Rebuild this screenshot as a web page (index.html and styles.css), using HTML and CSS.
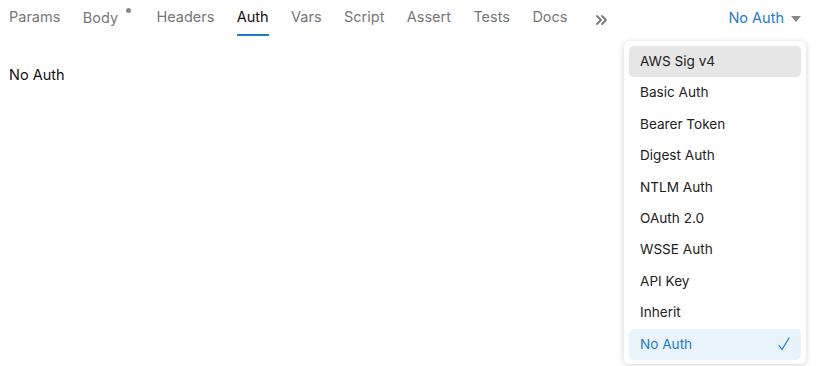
FILE: index.html
```html
<!DOCTYPE html>
<html>
<head>
<meta charset="utf-8"/>
<title>Auth</title>
<link rel="stylesheet" href="styles.css">
</head>
<body>

<div class="tabs">
  <div class="tab">Params</div>
  <div class="tab">Body<sup class="dot"></sup></div>
  <div class="tab">Headers</div>
  <div class="tab active">Auth</div>
  <div class="tab">Vars</div>
  <div class="tab">Script</div>
  <div class="tab">Assert</div>
  <div class="tab">Tests</div>
  <div class="tab">Docs</div>
  <div class="tab more">
    <svg width="14" height="12" viewBox="0 0 14 12"><path d="M2 2l4 4-4 4M7 2l4 4-4 4" fill="none" stroke="#777" stroke-width="1.8" stroke-linecap="round" stroke-linejoin="round"/></svg>
  </div>
  <div class="auth-mode">
    No Auth
    <svg width="10" height="6" viewBox="0 0 10 6"><path d="M0 0h10L5 6z" fill="#888"/></svg>
  </div>
</div>

<div class="content">No Auth</div>

<ul class="menu">
  <li class="hover">AWS Sig v4</li>
  <li>Basic Auth</li>
  <li>Bearer Token</li>
  <li>Digest Auth</li>
  <li>NTLM Auth</li>
  <li>OAuth 2.0</li>
  <li>WSSE Auth</li>
  <li>API Key</li>
  <li>Inherit</li>
  <li class="selected">No Auth
    <svg class="check" width="12" height="14" viewBox="0 0 12 14"><path d="M1 8.5l3 4L11 1" fill="none" stroke="#1a7bd0" stroke-width="1.2" stroke-linecap="round" stroke-linejoin="round"/></svg>
  </li>
</ul>

</body>
</html>
```

FILE: styles.css
```css
body {
   font-family: Inter, "Noto Sans", sans-serif;
   background-color: white;
   font-size: 14.5px;
   margin: 0;
   color: #111;
}

.tabs {
   display: flex;
   align-items: flex-start;
   height: 37px;
   padding: 0 15px 0 9px;
}

.tab {
   color: #777;
   margin-right: 22.4px;
   padding-top: 8px;
   height: 26px;
}

.tab.active {
   color: #111;
   border-bottom: 2px solid #1a7bd0;
}

.dot {
   display: inline-block;
   width: 5px;
   height: 5px;
   border-radius: 50%;
   background: #888;
   margin: 0 3px 0 8px;
   vertical-align: 10px;
}

.tab.more {
   padding-top: 12px;
   margin-left: 5px;
   margin-right: 0;
}

.auth-mode {
   margin-left: auto;
   color: #1a7bd0;
   padding-top: 9px;
   display: flex;
   align-items: center;
   gap: 7px;
}

.auth-mode svg {
   margin-top: 2px;
}

.content {
   padding: 29px 9px;
}

.menu {
   position: absolute;
   top: 41px;
   left: 624px;
   width: 172px;
   margin: 0;
   padding: 5px 5px 4px;
   list-style: none;
   background: white;
   border-radius: 6px;
   box-shadow: 0 1px 6px rgba(0, 0, 0, 0.18);
   font-size: 13.6px;
}

.menu li {
   height: 31.4px;
   line-height: 31.4px;
   padding: 0 11px;
   border-radius: 5px;
   color: #222;
   display: flex;
   justify-content: space-between;
   align-items: center;
}

.menu li.hover {
   background: #e6e6e6;
}

.menu li.selected {
   background: #e9f3fc;
   color: #1a7bd0;
}

.check {
   margin-right: 0;
}
```
